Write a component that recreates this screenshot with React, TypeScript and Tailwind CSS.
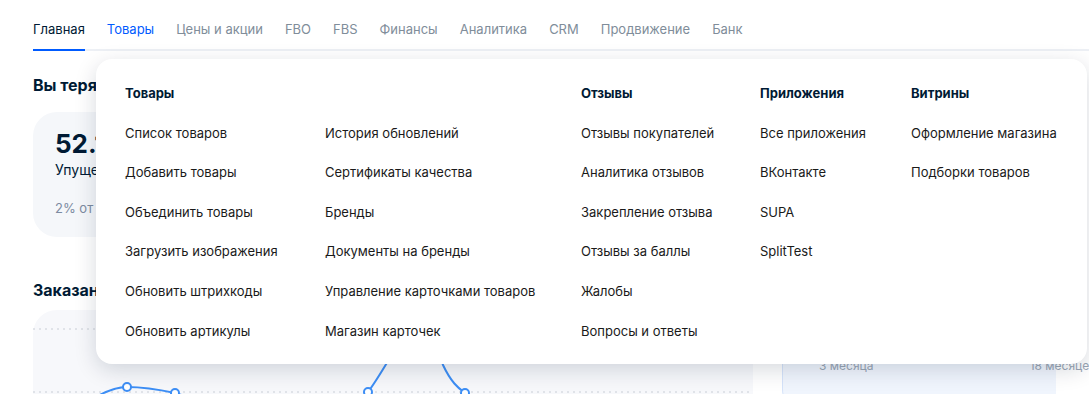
import React from 'react';

const font = { fontFamily: 'Inter, "Noto Sans", sans-serif' };

const tabs = ['Главная', 'Товары', 'Цены и акции', 'FBO', 'FBS', 'Финансы', 'Аналитика', 'CRM', 'Продвижение', 'Банк'];

const columns: { title: string; items: string[] }[] = [
  {
    title: 'Товары',
    items: ['Список товаров', 'Добавить товары', 'Объединить товары', 'Загрузить изображения', 'Обновить штрихкоды', 'Обновить артикулы'],
  },
  {
    title: '',
    items: ['История обновлений', 'Сертификаты качества', 'Бренды', 'Документы на бренды', 'Управление карточками товаров', 'Магазин карточек'],
  },
  {
    title: 'Отзывы',
    items: ['Отзывы покупателей', 'Аналитика отзывов', 'Закрепление отзыва', 'Отзывы за баллы', 'Жалобы', 'Вопросы и ответы'],
  },
  {
    title: 'Приложения',
    items: ['Все приложения', 'ВКонтакте', 'SUPA', 'SplitTest'],
  },
  {
    title: 'Витрины',
    items: ['Оформление магазина', 'Подборки товаров'],
  },
];

function Chart() {
  return (
    <svg className="absolute inset-0" width="720" height="120" viewBox="0 0 720 120" fill="none">
      <line x1="0" y1="19" x2="720" y2="19" stroke="#c9ced6" strokeWidth="1" strokeDasharray="2 4" />
      <line x1="0" y1="82" x2="720" y2="82" stroke="#c9ced6" strokeWidth="1" strokeDasharray="2 4" />
      <path
        d="M55 92 C70 82 82 77 94 77 C112 77 128 80 142 83 C200 100 290 140 335 82 C355 55 370 20 384 10 C395 2 400 30 410 55 C418 72 425 78 432 83 C445 95 455 110 470 125"
        stroke="#3d8ef5"
        strokeWidth="2"
      />
      {[
        [94, 77],
        [142, 83],
        [335, 82],
        [432, 83],
      ].map(([cx, cy]) => (
        <circle key={cx} cx={cx} cy={cy} r="4" fill="white" stroke="#3d8ef5" strokeWidth="2" />
      ))}
    </svg>
  );
}

export default function App() {
  return (
    <div className="relative w-full h-[394px] overflow-hidden bg-white" style={font}>
      {/* Tabs */}
      <nav className="ml-[33px] flex gap-[22px] border-b-2 border-[#edf0f5] pt-[19px]">
        {tabs.map((t, i) => (
          <div
            key={t}
            className={
              'pb-[10px] -mb-[2px] border-b-2 text-[13px] leading-5 ' +
              (i === 0
                ? 'border-[#005bff] text-[#001a34]'
                : i === 1
                ? 'border-transparent text-[#005bff]'
                : 'border-transparent text-[#808d9a]')
            }
          >
            {t}
          </div>
        ))}
      </nav>

      {/* Page content behind the menu */}
      <div className="flex gap-[29px] px-[33px]">
        <div className="w-[720px] shrink-0">
          <h2 className="mt-[24px] text-[16px] leading-5 font-bold text-[#001a34]">Вы теряете</h2>
          <div className="mt-[17px] h-[125px] w-[360px] overflow-hidden rounded-[24px] bg-[#f5f7fa] pl-[22px] pt-[16px]">
            <div className="text-[26px] leading-8 font-bold text-[#001a34]">52.1</div>
            <div className="text-[14px] leading-5 text-[#001a34]">Упущено</div>
            <div className="mt-[18px] text-[13px] leading-5 text-[#7c8ba1]">2% от</div>
          </div>
          <h2 className="mt-[43px] text-[16px] leading-5 font-bold text-[#001a34]">Заказано</h2>
          <div className="relative mt-[10px] h-[120px] rounded-t-[24px] bg-[#f7f8fb]">
            <Chart />
          </div>
        </div>
        <div className="mt-[62px] h-[300px] flex-1 rounded-l-[24px] border-l border-[#d5e3fa] bg-[#f0f5fd] flex flex-col justify-end">
          <div className="mb-[39px] flex justify-between pl-[36px] text-[12px] leading-4 text-[#9aa6b5]">
            <span>3 месяца</span>
            <span className="-mr-[40px]">18 месяцев</span>
          </div>
        </div>
      </div>

      {/* Dropdown menu */}
      <div className="absolute left-[96px] top-[59px] w-[991px] rounded-[16px] bg-white pl-[29px] pt-[24px] pb-[23px] shadow-[0_6px_22px_rgba(0,26,52,0.16)]">
        <div className="grid grid-cols-[200px_256px_179px_151px_1fr]">
          {columns.map((col, i) => (
            <div key={i} className="flex flex-col gap-[19.6px]">
              <div className="h-5 text-[13px] leading-5 font-bold text-[#001a34]">{col.title}</div>
              {col.items.map((it) => (
                <div key={it} className="h-5 text-[13px] leading-5 text-[#1a1a1a] whitespace-nowrap">
                  {it}
                </div>
              ))}
            </div>
          ))}
        </div>
      </div>
    </div>
  );
}
